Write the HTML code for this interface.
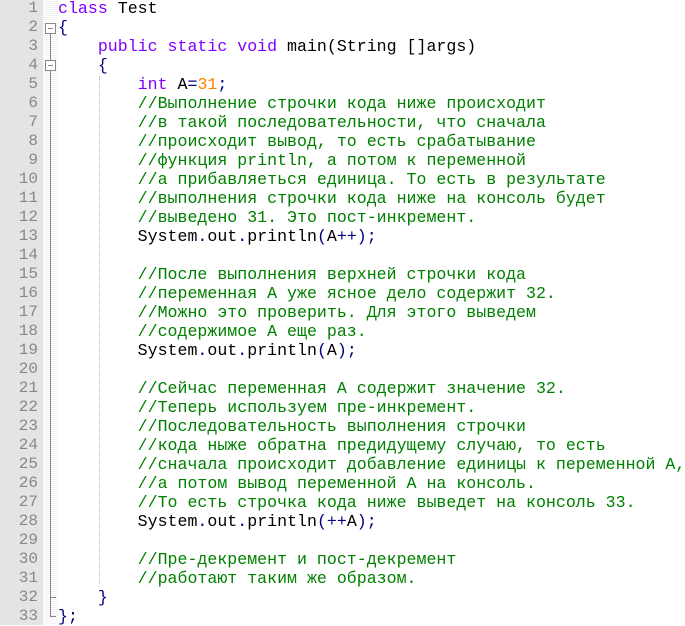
<!DOCTYPE html><html><head><meta charset="utf-8"><style>
body{margin:0;width:685px;height:625px;overflow:hidden;background:#fff;font-family:"Liberation Mono","DejaVu Sans Mono",monospace;}
#ln{position:absolute;left:0;top:0;width:43px;height:625px;background:#e4e4e4;}
#fold{position:absolute;left:43px;top:0;width:15px;height:625px;background:#f3f3f3;background-image:repeating-linear-gradient(0deg,#fff 0 1px,transparent 1px 2px);}
.r{position:absolute;left:0;height:19px;line-height:19px;font-size:16.6px;white-space:pre;}
.n{width:38px;text-align:right;color:#888;font-size:16px;}
.c{left:58px;color:#000;}
.k{color:#8000ff}.g{color:#008000}.o{color:#ff8000}.b{color:#000080}.p{color:#000080}
.box{position:absolute;left:45px;width:9px;height:9px;border:1px solid #888;background:#fff}
.box:after{content:"";position:absolute;left:2px;top:4px;width:5px;height:1px;background:#888}
.vl{position:absolute;left:50px;width:1px;background:#888}
.hl{position:absolute;left:50px;height:1px;width:6px;background:#888}
.guide{position:absolute;left:99px;top:76px;height:508px;border-left:1px dotted #bbb}
</style></head><body>
<div id="ln"></div><div id="fold"></div>
<div class="vl" style="top:34px;height:26px"></div>
<div class="vl" style="top:71px;height:546px"></div>
<div class="box" style="top:23px"></div><div class="box" style="top:60px"></div>
<div class="hl" style="top:597px"></div><div class="hl" style="top:616px"></div>
<div class="guide"></div>
<div class="r n" style="top:-1px">1</div><div class="r n" style="top:18px">2</div><div class="r n" style="top:37px">3</div><div class="r n" style="top:56px">4</div><div class="r n" style="top:75px">5</div><div class="r n" style="top:94px">6</div><div class="r n" style="top:113px">7</div><div class="r n" style="top:132px">8</div><div class="r n" style="top:151px">9</div><div class="r n" style="top:170px">10</div><div class="r n" style="top:189px">11</div><div class="r n" style="top:208px">12</div><div class="r n" style="top:227px">13</div><div class="r n" style="top:246px">14</div><div class="r n" style="top:265px">15</div><div class="r n" style="top:284px">16</div><div class="r n" style="top:303px">17</div><div class="r n" style="top:322px">18</div><div class="r n" style="top:341px">19</div><div class="r n" style="top:360px">20</div><div class="r n" style="top:379px">21</div><div class="r n" style="top:398px">22</div><div class="r n" style="top:417px">23</div><div class="r n" style="top:436px">24</div><div class="r n" style="top:455px">25</div><div class="r n" style="top:474px">26</div><div class="r n" style="top:493px">27</div><div class="r n" style="top:512px">28</div><div class="r n" style="top:531px">29</div><div class="r n" style="top:550px">30</div><div class="r n" style="top:569px">31</div><div class="r n" style="top:588px">32</div><div class="r n" style="top:607px">33</div>
<div class="r c" style="top:-1px"><span class="k">class</span> Test</div>
<div class="r c" style="top:18px"><span class="b">{</span></div>
<div class="r c" style="top:37px">    <span class="k">public static void</span> main(String []args)</div>
<div class="r c" style="top:56px">    <span class="b">{</span></div>
<div class="r c" style="top:75px">        <span class="k">int</span> A<span class="p">=</span><span class="o">31</span><span class="p">;</span></div>
<div class="r c g" style="top:94px">        //Выполнение строчки кода ниже происходит</div>
<div class="r c g" style="top:113px">        //в такой последовательности, что сначала</div>
<div class="r c g" style="top:132px">        //происходит вывод, то есть срабатывание</div>
<div class="r c g" style="top:151px">        //функция println, а потом к переменной</div>
<div class="r c g" style="top:170px">        //а прибавляеться единица. То есть в результате</div>
<div class="r c g" style="top:189px">        //выполнения строчки кода ниже на консоль будет</div>
<div class="r c g" style="top:208px">        //выведено 31. Это пост-инкремент.</div>
<div class="r c" style="top:227px">        System<span class="p">.</span>out<span class="p">.</span>println<span class="p">(</span>A<span class="p">++);</span></div>
<div class="r c g" style="top:265px">        //После выполнения верхней строчки кода</div>
<div class="r c g" style="top:284px">        //переменная А уже ясное дело содержит 32.</div>
<div class="r c g" style="top:303px">        //Можно это проверить. Для этого выведем</div>
<div class="r c g" style="top:322px">        //содержимое А еще раз.</div>
<div class="r c" style="top:341px">        System<span class="p">.</span>out<span class="p">.</span>println<span class="p">(</span>A<span class="p">);</span></div>
<div class="r c g" style="top:379px">        //Сейчас переменная А содержит значение 32.</div>
<div class="r c g" style="top:398px">        //Теперь используем пре-инкремент.</div>
<div class="r c g" style="top:417px">        //Последовательность выполнения строчки</div>
<div class="r c g" style="top:436px">        //кода ныже обратна предидущему случаю, то есть</div>
<div class="r c g" style="top:455px">        //сначала происходит добавление единицы к переменной А,</div>
<div class="r c g" style="top:474px">        //а потом вывод переменной А на консоль.</div>
<div class="r c g" style="top:493px">        //То есть строчка кода ниже выведет на консоль 33.</div>
<div class="r c" style="top:512px">        System<span class="p">.</span>out<span class="p">.</span>println<span class="p">(++</span>A<span class="p">);</span></div>
<div class="r c g" style="top:550px">        //Пре-декремент и пост-декремент</div>
<div class="r c g" style="top:569px">        //работают таким же образом.</div>
<div class="r c" style="top:588px">    <span class="b">}</span></div>
<div class="r c" style="top:607px"><span class="b">}</span><span class="p">;</span></div>
</body></html>
